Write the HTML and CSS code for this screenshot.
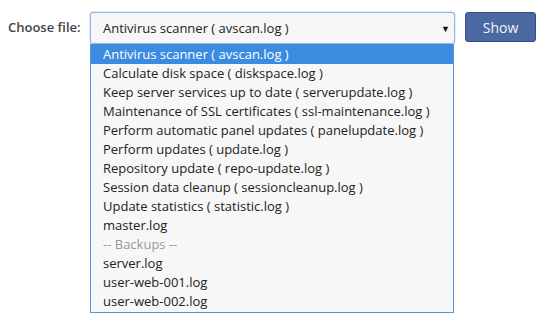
FILE: index.html
```html
<!DOCTYPE html>
<html lang="en">
<head>
  <meta charset="UTF-8" />
  <title>Logs</title>
  <link rel="stylesheet" href="styles.css">
</head>
<body>
  <form class="log-form">
    <label class="label">Choose file:</label>
    <div class="select-wrap">
      <div class="select-box">
        <span>Antivirus scanner ( avscan.log )</span>
        <span class="arrow">&#9660;</span>
      </div>
      <div class="file-list">
        <div class="item selected">Antivirus scanner ( avscan.log )</div>
        <div class="item">Calculate disk space ( diskspace.log )</div>
        <div class="item">Keep server services up to date ( serverupdate.log )</div>
        <div class="item">Maintenance of SSL certificates ( ssl-maintenance.log )</div>
        <div class="item">Perform automatic panel updates ( panelupdate.log )</div>
        <div class="item">Perform updates ( update.log )</div>
        <div class="item">Repository update ( repo-update.log )</div>
        <div class="item">Session data cleanup ( sessioncleanup.log )</div>
        <div class="item">Update statistics ( statistic.log )</div>
        <div class="item">master.log</div>
        <div class="item group">-- Backups --</div>
        <div class="item">server.log</div>
        <div class="item">user-web-001.log</div>
        <div class="item">user-web-002.log</div>
      </div>
    </div>
    <button type="button" class="show-btn">Show</button>
  </form>
</body>
</html>
```

FILE: styles.css
```css
body {
  margin: 0;
  font-family: 'Open Sans', sans-serif;
  font-size: 13px;
  color: #333;
  background: #fff;
}

.log-form {
  display: flex;
  align-items: flex-start;
  padding: 12px 0 0 8px;
}

.label {
  width: 82px;
  line-height: 31px;
  font-weight: 600;
  color: #444;
}

.select-wrap {
  display: flex;
  flex-direction: column;
  width: 365px;
}

.select-box {
  box-sizing: border-box;
  height: 32px;
  display: flex;
  align-items: center;
  justify-content: space-between;
  padding: 0 4px 0 12px;
  background: #f6f6f6;
  border: 1px solid #8fb6e3;
  border-radius: 3px;
  box-shadow: 0 0 2px rgba(82, 145, 220, 0.6);
  color: #222;
}

.arrow {
  font-size: 9px;
  color: #111;
}

.file-list {
  margin-right: 1px;
  padding-bottom: 1px;
  background: #f7f7f7;
  border: 1px solid #5e93d1;
  border-top: none;
}

.item {
  height: 19px;
  line-height: 19px;
  padding-left: 12px;
  color: #222;
  white-space: nowrap;
}

.item.selected {
  height: 20px;
  line-height: 20px;
  background: #3b8be0;
  color: #fff;
}

.item.group {
  color: #999;
}

.show-btn {
  margin-left: 10px;
  width: 71px;
  height: 30px;
  font-family: 'Open Sans', sans-serif;
  font-size: 14px;
  color: #f2f4f8;
  background: #4a68a2;
  border: 1px solid #384f7e;
  border-radius: 3px;
}
```
